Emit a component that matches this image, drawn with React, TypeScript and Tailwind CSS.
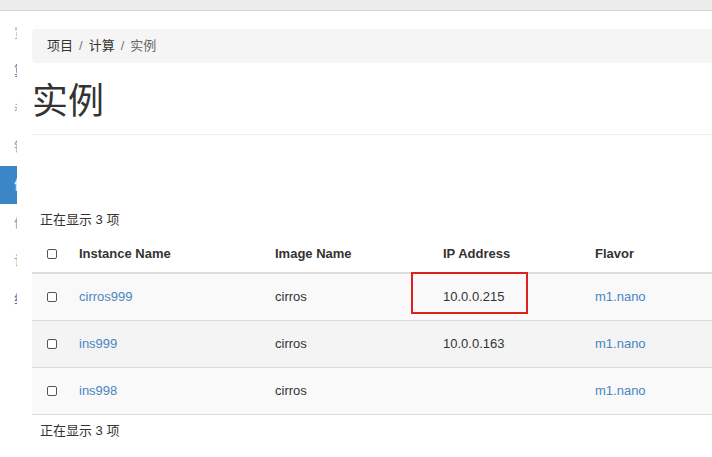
import React from 'react';

const rows = [
  { name: 'cirros999', image: 'cirros', ip: '10.0.0.215', flavor: 'm1.nano', mark: true, bg: 'bg-[#f9f9f9]' },
  { name: 'ins999', image: 'cirros', ip: '10.0.0.163', flavor: 'm1.nano', mark: false, bg: 'bg-[#f4f4f4]' },
  { name: 'ins998', image: 'cirros', ip: '', flavor: 'm1.nano', mark: false, bg: 'bg-[#f9f9f9]' },
];

const sideItems = ['览', '算', '卷', '镜', '例', '像', '计', '组'];

const Checkbox = () => (
  <span className="inline-block w-[10px] h-[10px] border border-[#555] rounded-[2px] bg-white" />
);

const App = () => {
  return (
    <div
      className="w-[712px] h-[457px] overflow-hidden bg-white text-[#333] text-[13px]"
      style={{ fontFamily: '"Liberation Sans", "Noto Sans CJK SC", sans-serif' }}
    >
      {/* top bar */}
      <div className="h-[11px] bg-[#ececec] border-b border-[#d2d2d2]" />

      <div className="flex">
        {/* sidebar, cut off by the window edge */}
        <div className="w-[17px] shrink-0 overflow-hidden pt-[3px]">
          {sideItems.map((c, i) => (
            <div
              key={i}
              className={`h-[38px] flex items-center justify-end ${i === 4 ? 'bg-[#3b86c7] text-white' : i === 1 || i === 7 ? 'text-[#3b6fa8]' : 'text-[#999]'}`}
            >
              <span className="text-[13px] mr-[-10px]">{c}</span>
            </div>
          ))}
        </div>

        {/* main */}
        <div className="flex-1 pl-[15px] min-w-0">
          <div className="mt-[18px] h-[34px] bg-[#f5f5f5] rounded-l-[4px] flex items-center pl-[15px] text-[13px]">
            <span>项目</span>
            <span className="px-[6px] text-[#777]">/</span>
            <span>计算</span>
            <span className="px-[6px] text-[#777]">/</span>
            <span className="text-[#666]">实例</span>
          </div>

          <div className="pt-[18px] pb-[11px] border-b border-[#eee]">
            <h1 className="text-[36px] leading-[42px] text-[#333] font-normal">实例</h1>
          </div>

          <div className="mt-[76px] pl-[8px] h-[18px] leading-[18px]">正在显示 3 项</div>

          <div className="mt-[7px] w-[700px]">
            <div className="grid grid-cols-[47px_196px_168px_152px_1fr] h-[38px] items-center border-b-2 border-[#ddd] font-bold text-[#333]">
              <div className="pl-[15px] flex items-center">
                <Checkbox />
              </div>
              <div>Instance Name</div>
              <div>Image Name</div>
              <div>IP Address</div>
              <div>Flavor</div>
            </div>
            {rows.map((r, i) => (
              <div
                key={i}
                className={`grid grid-cols-[47px_196px_168px_152px_1fr] h-[47px] items-center border-b border-[#ddd] ${r.bg}`}
              >
                <div className="pl-[15px] flex items-center">
                  <Checkbox />
                </div>
                <div className="text-[#4a86c0]">{r.name}</div>
                <div>{r.image}</div>
                <div className="relative h-full flex items-center">
                  {r.ip}
                  {r.mark && (
                    <div className="absolute left-[-32px] top-[-2px] w-[117px] h-[42px] border-2 border-[#e0201b]" />
                  )}
                </div>
                <div className="text-[#4a86c0]">{r.flavor}</div>
              </div>
            ))}
          </div>

          <div className="mt-[7px] pl-[8px] h-[18px] leading-[18px]">正在显示 3 项</div>
        </div>
      </div>
    </div>
  );
};

export default App;
